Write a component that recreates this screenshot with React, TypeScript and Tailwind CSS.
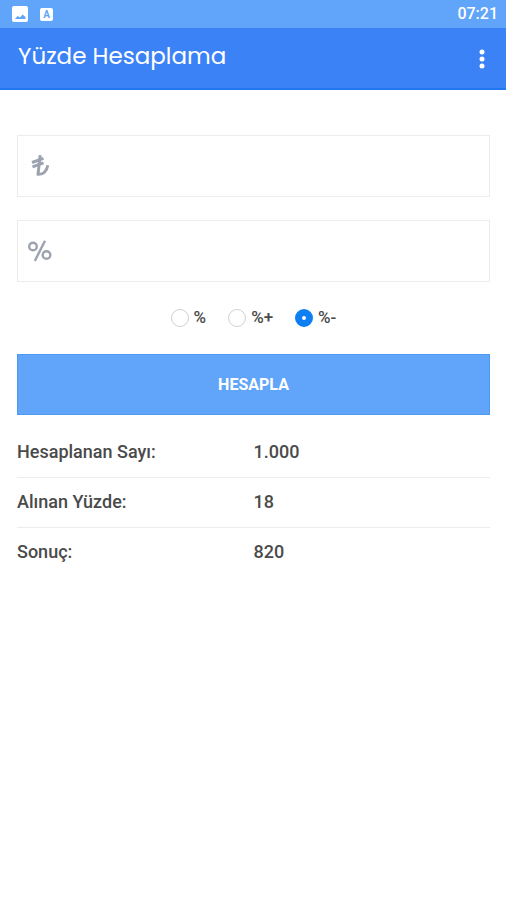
import { useState } from "react";

const modes = [
  { value: "percent", label: "%" },
  { value: "plus", label: "%+" },
  { value: "minus", label: "%-" },
];

const results = [
  { label: "Hesaplanan Sayı:", value: "1.000" },
  { label: "Alınan Yüzde:", value: "18" },
  { label: "Sonuç:", value: "820" },
];

const StatusBar = () => {
  return (
    <div className="flex h-7 items-center justify-between bg-[#60a5fa] pl-3 pr-2 text-white">
      <div className="flex items-center gap-3">
        <svg viewBox="0 0 16 16" className="size-4" fill="currentColor">
          <path
            fillRule="evenodd"
            d="M2 0h12a2 2 0 0 1 2 2v12a2 2 0 0 1-2 2H2a2 2 0 0 1-2-2V2a2 2 0 0 1 2-2zM3 13h10.500V11L10.500 8.500 8 11.500 5.500 10z"
          />
        </svg>
        <span className="flex size-[13px] items-center justify-center rounded-xs bg-white text-[10px] font-bold text-[#60a5fa]">
          A
        </span>
      </div>
      <span className="text-base font-medium">07:21</span>
    </div>
  );
};

const Header = () => {
  return (
    <header className="flex h-[62px] items-center justify-between border-b-2 border-[#1f78f2] bg-[#3b82f6] pl-[18px] pr-4 text-white">
      <h1 className="pb-1 font-[Poppins,Inter,sans-serif] text-[23px]">
        Yüzde Hesaplama
      </h1>
      <button type="button" aria-label="Menü">
        <svg viewBox="0 0 16 24" className="h-6 w-4" fill="currentColor">
          <circle cx="8" cy="6" r="2.5" />
          <circle cx="8" cy="13" r="2.5" />
          <circle cx="8" cy="20" r="2.5" />
        </svg>
      </button>
    </header>
  );
};

const LiraIcon = () => {
  return (
    <svg
      viewBox="0 0 24 24"
      className="size-6"
      fill="none"
      stroke="currentColor"
      strokeWidth="3"
      strokeLinejoin="round"
    >
      <path d="M12.200 1.200 10 20.300C15 20.700 18.800 17 19.800 11.200" />
      <path d="M4 8.500 15.500 4.300M4.500 12.800 15.500 8.800" />
    </svg>
  );
};

const PercentIcon = () => {
  return (
    <svg
      viewBox="0 0 24 24"
      className="size-6"
      fill="none"
      stroke="currentColor"
      strokeWidth="2.4"
    >
      <circle cx="5" cy="7.500" r="3.800" />
      <circle cx="18.500" cy="16" r="3.800" />
      <path d="M17 1.800 6.800 22" />
    </svg>
  );
};

interface AmountFieldProps {
  id: string;
  label: string;
  icon: React.ReactNode;
}

const AmountField = ({ id, label, icon }: AmountFieldProps) => {
  return (
    <div className="flex h-[62px] items-center gap-3 border border-[#ececee] pl-[10px] text-[#9ca3af]">
      <label htmlFor={id} aria-label={label}>
        {icon}
      </label>
      <input
        id={id}
        inputMode="decimal"
        className="h-full min-w-0 flex-1 text-lg text-[#444] outline-none"
      />
    </div>
  );
};

const App = () => {
  const [mode, setMode] = useState("minus");

  return (
    <div className="min-h-screen bg-white font-[Roboto,sans-serif] text-[#4a4a4a]">
      <StatusBar />
      <Header />
      <main className="pl-[17px] pr-4 pt-[45px]">
        <form onSubmit={(e) => e.preventDefault()}>
          <div className="flex flex-col gap-[23px]">
            <AmountField id="amount" label="Sayı" icon={<LiraIcon />} />
            <AmountField id="rate" label="Yüzde" icon={<PercentIcon />} />
          </div>
          <div className="flex h-[72px] items-center justify-center gap-[22px]">
            {modes.map((item) => (
              <label
                key={item.value}
                className="flex items-center gap-[5px] text-[17px] font-medium"
              >
                <input
                  type="radio"
                  name="mode"
                  value={item.value}
                  checked={mode === item.value}
                  onChange={() => setMode(item.value)}
                  className="size-[18px] appearance-none rounded-full border border-[#d1d1d1] bg-white checked:border-[7px] checked:border-[#0d7ff2]"
                />
                {item.label}
              </label>
            ))}
          </div>
          <button
            type="submit"
            className="h-[61px] w-full border border-[#4d98f0] bg-[#60a5fa] text-base font-bold text-white"
          >
            HESAPLA
          </button>
        </form>
        <table className="mt-3 w-full table-fixed text-left text-lg">
          <tbody>
            {results.map((row) => (
              <tr
                key={row.label}
                className="h-[50px] border-b border-[#ececee] last:border-b-0"
              >
                <th className="font-medium">{row.label}</th>
                <td className="font-medium">{row.value}</td>
              </tr>
            ))}
          </tbody>
        </table>
      </main>
    </div>
  );
};

export default App;
